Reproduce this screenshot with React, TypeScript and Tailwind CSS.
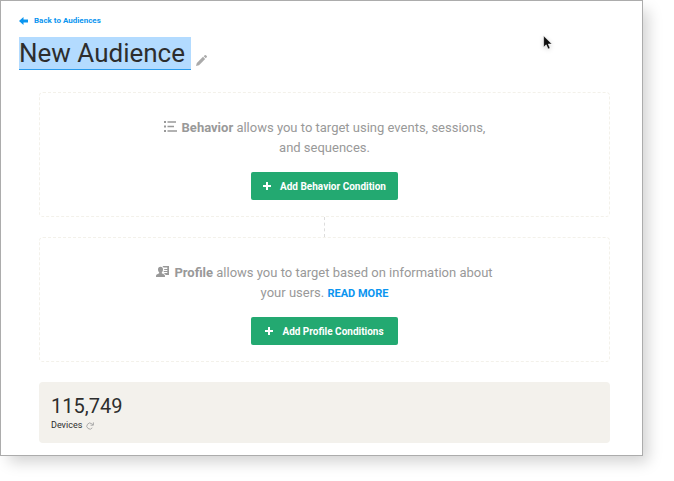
import type { ReactNode } from 'react';

interface ConditionCardProps {
  children: ReactNode;
  buttonLabel: string;
}

function BackArrowIcon() {
  return (
    <svg viewBox="0 0 9 8" className="h-2 w-[9px] fill-current" aria-hidden="true">
      <path d="M4.500 0v2.500H9v3H4.500V8L0 4z" />
    </svg>
  );
}

function PencilIcon() {
  return (
    <svg viewBox="0 0 11 11" className="h-[11px] w-[11px] fill-current" aria-hidden="true">
      <path d="M0 11l.8-3L7 1.800 9.200 4 3 10.200z" />
      <path d="M7.700 1.200L8.700.3a1 1 0 0 1 1.300 0l.7.7a1 1 0 0 1 0 1.300l-1 1z" />
    </svg>
  );
}

function ListIcon() {
  return (
    <svg viewBox="0 0 13 11" className="mr-[5px] inline-block h-[11px] w-[13px] fill-current align-baseline" aria-hidden="true">
      <path d="M0 0h2v2H0zM0 4.500h2v2H0zM0 9h2v2H0zM3.500 .2H12v1.600H3.500zM3.500 4.700H10v1.600H3.500zM3.500 9.200H13v1.600H3.500z" />
    </svg>
  );
}

function ProfileIcon() {
  return (
    <svg viewBox="0 0 13 11" className="mr-[5px] inline-block h-[11px] w-[13px] fill-current align-baseline" aria-hidden="true">
      <path d="M4.500 .8c1.600 0 2.500 1.100 2.500 2.700 0 1.200-.5 2.300-1.200 2.900v.9l2.400 1.100c.6.300.8.900.8 2.600H0c0-1.700.2-2.300.8-2.600l2.400-1.100v-.9C2.500 5.800 2 4.700 2 3.500 2 1.900 2.900.8 4.500.8z" />
      <path d="M6.500 0H13v9H9.600c-.2-.7-.6-1.100-1.300-1.400l-1-.5h4V6H7.500l.5-1h3.300V4H8.200V3h3.100V1.600H7.500z" />
    </svg>
  );
}

function PlusIcon() {
  return (
    <svg viewBox="0 0 8 8" className="h-2 w-2 fill-current" aria-hidden="true">
      <path d="M3 0h2v3h3v2H5v3H3V5H0V3h3z" />
    </svg>
  );
}

function RefreshIcon() {
  return (
    <svg viewBox="0 0 8 8" className="h-2 w-2" fill="none" stroke="currentColor" aria-hidden="true">
      <path d="M6.300 5.800A3 3 0 1 1 5.800 1.800L7 2.800" />
      <path d="M7.400 .4v2.800H4.600" />
    </svg>
  );
}

function CursorIcon() {
  return (
    <svg viewBox="0 0 10 16" className="pointer-events-none absolute top-[34px] left-[542px] h-4 w-[10px] drop-shadow-sm" aria-hidden="true">
      <path d="M.6 .8v11.400l2.600-2.400 1.900 4.300 2-.9-1.800-4.100h3.700z" fill="#111" stroke="#fff" strokeWidth=".6" />
    </svg>
  );
}

function ConditionCard({ children, buttonLabel }: ConditionCardProps) {
  return (
    <section className="flex flex-col items-center rounded border border-dashed border-[#f3f1ea] px-4 pt-[25px] pb-4">
      <p className="max-w-[342px] text-center text-[13px] leading-5 text-[#999]">{children}</p>
      <button
        type="button"
        className="mt-[14px] flex h-7 w-[147px] items-center justify-center gap-[9px] rounded-xs bg-[#23a971] text-[10px] font-bold text-white"
      >
        <PlusIcon />
        {buttonLabel}
      </button>
    </section>
  );
}

export default function App() {
  return (
    <div className="bg-white pb-[25px] font-[Roboto,sans-serif]">
      <main className="relative mr-[31px] border border-[#acacac] bg-white pr-8 pb-3 pl-[38px] shadow-[7px_8px_14px_-2px_rgba(0,0,0,0.18)]">
        <header className="-ml-5 pt-3">
          <a href="#audiences" className="flex w-fit items-center gap-[6px] text-[8px] leading-4 font-bold text-[#0a95f0]">
            <BackArrowIcon />
            Back to Audiences
          </a>
          <div className="mt-2 flex items-end gap-[5px]">
            <input
              type="text"
              aria-label="Audience name"
              defaultValue="New Audience"
              className="h-[33px] w-[172px] border-b border-[#2b9cec] bg-[#b3dbff] text-[26px] leading-8 text-[#2d2d2d] outline-none"
            />
            <button type="button" aria-label="Edit name" className="mb-1 text-[#aaa]">
              <PencilIcon />
            </button>
          </div>
        </header>

        <div className="mt-[22px]">
          <ConditionCard buttonLabel="Add Behavior Condition">
            <ListIcon />
            <strong>Behavior</strong> allows you to target using events, sessions, and sequences.
          </ConditionCard>
          <div className="mx-auto h-5 w-0 border-l border-dashed border-[#ddd]" />
          <ConditionCard buttonLabel="Add Profile Conditions">
            <ProfileIcon />
            <strong>Profile</strong> allows you to target based on information about your users.{' '}
            <a href="#read-more" className="inline-block text-[11px] leading-4 font-bold text-[#0a95f0]">READ MORE</a>
          </ConditionCard>
        </div>

        <section className="mt-5 rounded bg-[#f3f1ec] px-3 pt-3 pb-[10px] text-[#2d2d2d]">
          <div className="text-[20px] leading-6">115,749</div>
          <div className="flex items-center gap-1 text-[9px] leading-[15px]">
            Devices
            <button type="button" aria-label="Refresh devices" className="text-[#aaa]">
              <RefreshIcon />
            </button>
          </div>
        </section>

        <CursorIcon />
      </main>
    </div>
  );
}
